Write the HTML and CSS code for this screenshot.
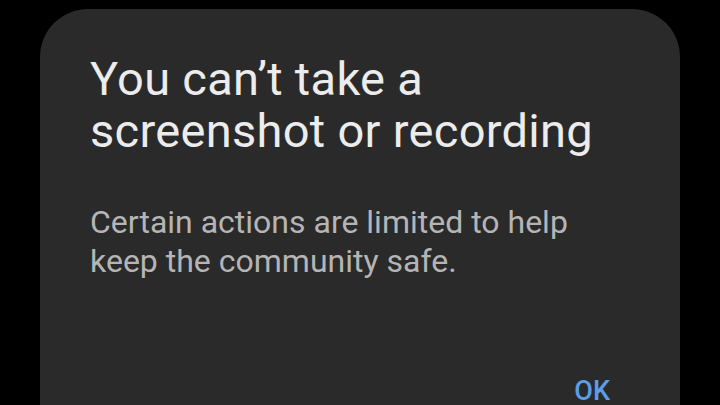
FILE: index.html
```html
<!DOCTYPE html>
<html lang="en">
<head>
    <meta charset="UTF-8">
    <meta name="viewport" content="width=device-width, initial-scale=1.0">
    <title>Screenshot blocked</title>
    <link rel="stylesheet" href="styles.css">
</head>
<body>
    <div class="dialog">
        <h1 class="dialog-title">You can’t take a screenshot or recording</h1>
        <p class="dialog-text">Certain actions are limited to help keep the community safe.</p>
        <div class="dialog-actions">
            <button class="dialog-ok">OK</button>
        </div>
    </div>
</body>
</html>
```
FILE: styles.css
```css
body {
    margin: 0;
    background-color: #000;
    font-family: 'Roboto', sans-serif;
    height: 405px;
    overflow: hidden;
}
.dialog {
    margin: 9px 40px 0;
    height: 460px;
    background-color: #2a2a2a;
    border-radius: 48px;
    padding: 44px 50px 0;
    box-sizing: border-box;
}
.dialog-title {
    margin: 0;
    font-size: 47px;
    font-weight: 400;
    line-height: 52px;
    letter-spacing: 0.3px;
    color: #ececec;
    width: 540px;
}
.dialog-text {
    margin: 46px 0 0;
    font-size: 32px;
    line-height: 39px;
    color: #b5b5b5;
    width: 500px;
}
.dialog-actions {
    display: flex;
    justify-content: flex-end;
    margin-top: 94px;
}
.dialog-ok {
    background: none;
    border: none;
    padding: 0;
    margin-right: 20px;
    font-family: 'Roboto', sans-serif;
    font-size: 27px;
    font-weight: 500;
    line-height: normal;
    color: #5c9de6;
}
```
